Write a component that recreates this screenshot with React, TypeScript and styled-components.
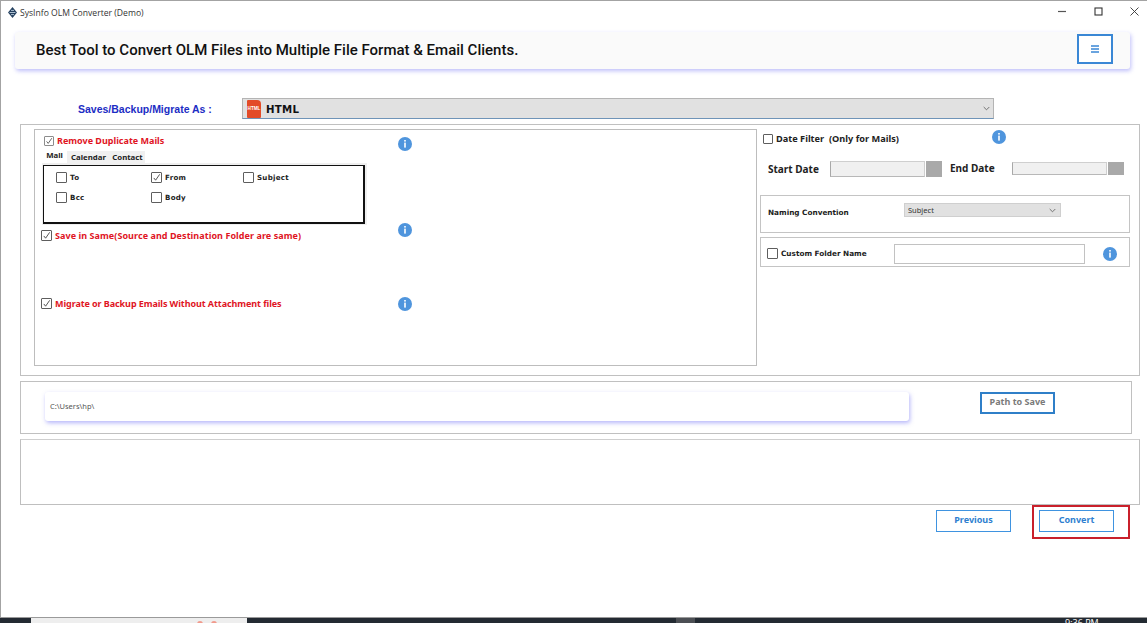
import React from "react";
import styled, { createGlobalStyle } from "styled-components";

const Global = createGlobalStyle`
  * { box-sizing: border-box; }
  html, body { margin: 0; padding: 0; background: #fff; }
  body { font-family: "Liberation Sans", Arial, sans-serif; overflow: hidden; }
`;

const Page = styled.div`
  width: 1147px; height: 623px; display: flex; flex-direction: column; overflow: hidden;
`;
const Win = styled.div`
  flex: 1; min-height: 0; border-top: 1px solid #a3a3a3; border-left: 1px solid #a3a3a3; background: #fff;
`;
const TitleBar = styled.div`
  height: 23px; display: flex; align-items: center; padding-left: 7px;
`;
const TitleText = styled.span`
  margin-left: 3px; font: 400 8.6px "Open Sans", sans-serif; color: #333; white-space: nowrap; flex: 1;
`;
const WinControls = styled.div`
  display: flex; align-items: center; gap: 27px; padding: 0 8px 2px 0; color: #333;
`;
const Banner = styled.div`
  margin: 8px 17px 0 14px; height: 37px; display: flex; justify-content: space-between;
  padding: 2px 17px 0 21px; background: #fafafa; border-radius: 3px;
  box-shadow: 1px 2px 4px rgba(110, 110, 245, 0.45);
`;
const BannerText = styled.h1`
  margin: 0; padding-top: 7px; font: 500 15px Roboto, sans-serif; color: #111; white-space: nowrap;
`;
const MenuButton = styled.div`
  width: 36px; height: 30px; border: 2px solid #3a87d5; background: #fff;
  display: flex; align-items: center; justify-content: center;
`;
const SaveRow = styled.div`
  margin-top: 29px; height: 21px; display: flex; align-items: center; padding-left: 77px;
`;
const SaveLabel = styled.label`
  width: 164px; font: 700 10.5px "Liberation Sans", sans-serif; color: #1c2dc4;
`;
const FormatSelect = styled.div`
  width: 752px; height: 21px; display: flex; align-items: center; padding: 0 3px 0 4px; background: #e1e1e1;
  border: 1px solid #b4b4b4; border-bottom: 1px solid #6f94b8;
`;
const FileIcon = styled.span`
  width: 14px; height: 18px; background: #e34b28; color: #fff; border-radius: 1px 4px 1px 1px;
  font: 700 4.6px "Liberation Sans", sans-serif; display: flex; align-items: center; justify-content: center; margin-right: 5px;
`;
const FormatName = styled.span`
  flex: 1; font: 700 10.2px "DejaVu Sans", sans-serif; color: #111; letter-spacing: 0.3px; padding-top: 1px;
`;
const MainPanel = styled.div`
  margin: 5px 7px 0 19px; height: 252px; border: 1px solid #c0c0c0; padding: 4px 0 0 13px; display: flex;
`;
const LeftPanel = styled.div`
  width: 723px; height: 237px; border: 1px solid #bdbdbd;
`;
const RightColumn = styled.div`
  margin-left: 3px; width: 370px;
`;
const OptionRow = styled.div<{ $top: number; $left: number; $height: number }>`
  display: flex; align-items: flex-start;
  margin-top: ${(p) => p.$top}px; padding-left: ${(p) => p.$left}px; height: ${(p) => p.$height}px;
`;
const OptionLabel = styled.div<{ $width: number; $height: number }>`
  width: ${(p) => p.$width}px; display: flex; align-items: center; gap: 3px; height: ${(p) => p.$height}px;
`;
const RedText = styled.span<{ $spread?: number; $lift?: number }>`
  font: 700 9px/12px "Noto Sans", sans-serif; color: #e0151f; white-space: nowrap;
  letter-spacing: ${(p) => p.$spread ?? 0}px; padding-bottom: ${(p) => p.$lift ?? 0}px;
`;
const InfoSlot = styled.span<{ $shift: number }>`
  display: block; margin-top: ${(p) => p.$shift}px; line-height: 0;
`;
const Box = styled.span<{ $size: number; $muted?: boolean }>`
  flex: none; width: ${(p) => p.$size}px; height: ${(p) => p.$size}px; background: #fff;
  border: 1px solid ${(p) => (p.$muted ? "#8c8c8c" : "#5e5e5e")};
  display: inline-flex; align-items: center; justify-content: center; border-radius: 1px;
`;
const TabStrip = styled.div`
  margin-left: 7px; height: 13px; display: flex; align-items: flex-end; font: 700 7.8px "Noto Sans", sans-serif; color: #222;
`;
const Tab = styled.div<{ $width: number; $active?: boolean }>`
  width: ${(p) => p.$width}px; height: ${(p) => (p.$active ? 13 : 12)}px; text-align: center;
  line-height: ${(p) => (p.$active ? 10 : 12)}px; background: ${(p) => (p.$active ? "#fff" : "#f0f0f0")};
`;
const TabBody = styled.div`
  margin-left: 7px; width: 325px; height: 62px; background: #efefef; padding: 2px 2px 1px 1px;
`;
const TabInner = styled.div`
  height: 59px; border: 1px solid #111; border-bottom-width: 2px; border-right-width: 2px; background: #fff; padding: 6px 0 0 12px;
  display: grid; grid-template-columns: 95px 92px 1fr; grid-auto-rows: 20px;
`;
const FieldCheck = styled.div`
  display: flex; align-items: flex-start; gap: 3px; font: 700 7.1px "DejaVu Sans", sans-serif; color: #222; letter-spacing: 0.25px; line-height: 11px;
`;
const DateBlock = styled.div`
  height: 66px;
`;
const DateHead = styled.div`
  display: flex; align-items: flex-start; padding: 5px 0 0 3px; height: 32px;
`;
const DateTitle = styled.div`
  width: 229px; height: 10px; display: flex; align-items: center; gap: 3px; font: 700 9.2px/10px "Noto Sans", sans-serif; color: #222; white-space: nowrap;
`;
const DateRow = styled.div`
  display: flex; align-items: flex-start; padding-left: 8px;
`;
const DateLabel = styled.span<{ $top: number }>`
  width: 62px; font: 700 10px/15px "Noto Sans", sans-serif; color: #222; margin-top: ${(p) => p.$top}px;
`;
const DateInput = styled.div<{ $height: number; $top: number }>`
  width: 95px; height: ${(p) => p.$height}px; margin-top: ${(p) => p.$top}px; background: #f0f0f0;
  border: 1px solid #cfcfcf; border-left-color: #a8a8a8; border-bottom-color: #b8b8b8;
`;
const CalButton = styled.div<{ $height: number; $top: number; $gap: number }>`
  width: 16px; height: ${(p) => p.$height}px; margin: ${(p) => p.$top}px ${(p) => p.$gap}px 0 1px; background: #a9a9a9;
`;
const SideBox = styled.div<{ $height: number; $top: number; $pad: number }>`
  height: ${(p) => p.$height}px; margin-top: ${(p) => p.$top}px; border: 1px solid #c4c4c4; padding-left: ${(p) => p.$pad}px;
  display: flex;
`;
const NamingLabel = styled.span`
  width: 136px; padding-top: 12px; font: 700 7.3px "DejaVu Sans", sans-serif; color: #222; white-space: nowrap;
`;
const FolderLabel = styled.span`
  width: 116px; padding-left: 3px; font: 700 7.3px "DejaVu Sans", sans-serif; color: #222; white-space: nowrap;
`;
const NamingSelect = styled.div`
  width: 157px; height: 14px; margin-top: 7px; background: #e1e1e1; border: 1px solid #cfcfcf; padding: 0 4px 0 3px;
  display: flex; align-items: center; justify-content: space-between; font: 400 7.5px "Noto Sans", sans-serif; color: #333;
`;
const FolderRow = styled.div`
  display: flex; align-items: center; width: 100%; padding-top: 3px;
`;
const FolderInput = styled.div`
  width: 191px; height: 20px; border: 1px solid #c2c2c2; margin: 0 18px 0 0; background: #fff;
`;
const PathPanel = styled.div`
  margin: 5px 15px 0 19px; height: 53px; border: 1px solid #c0c0c0; padding: 10px 0 0 24px; display: flex; align-items: flex-start;
`;
const PathInput = styled.div`
  width: 864px; height: 29px; background: #fff; border-radius: 3px; padding-left: 5px;
  font: 400 7.5px/29px "Noto Sans", sans-serif; color: #555;
  box-shadow: 1px 2px 4px rgba(110, 110, 245, 0.5);
`;
const ActionButton = styled.button<{ $color: string; $text: string; $strong?: boolean }>`
  width: 75px; height: 22px; padding: 0 0 2px; background: #fff; border: ${(p) => (p.$strong ? 2 : 1.5)}px solid ${(p) => p.$color};
  color: ${(p) => p.$text}; font: 700 9px "Noto Sans", sans-serif; cursor: pointer;
`;
const PathButtonSlot = styled.div`
  margin: -1px 0 0 71px;
`;
const LogBox = styled.div`
  margin: 5px 7px 0 19px; height: 66px; border: 1px solid #bfbfbf; border-top-color: #cfcfcf;
`;
const Footer = styled.div`
  padding-right: 17px; display: flex; justify-content: flex-end; align-items: flex-start;
`;
const PrevSlot = styled.div`
  margin: 4px 21px 0 0;
`;
const Highlight = styled.div`
  width: 98px; height: 34px; border: 2px solid #c9202b; padding: 2px 0 0 5px;
`;
const Taskbar = styled.div`
  height: 6px; flex: none; background: #232a32; border-top: 1px solid #9a9a9a; display: flex; overflow: hidden;
`;
const TaskWhite = styled.div`
  width: 216px; margin-left: 31px; background: #eeeeee; position: relative;
`;
const TaskDot = styled.span<{ $at: number }>`
  position: absolute; top: 3px; left: ${(p) => p.$at}px; width: 6px; height: 6px; border-radius: 50%; background: #f19a8c;
`;
const TaskActive = styled.div`
  width: 19px; margin-left: 429px; background: #4c4f54;
`;
const TaskClock = styled.span`
  margin-left: 370px; font: 400 9px/9px "Open Sans", sans-serif; color: #fff; white-space: nowrap;
`;

const Info = () => (
  <svg width="14" height="14" viewBox="0 0 14 14">
    <circle cx="7" cy="7" r="7" fill="#4f95dd" />
    <rect x="6.2" y="3" width="1.6" height="1.6" fill="#fff" />
    <rect x="6.2" y="5.6" width="1.6" height="5" fill="#fff" />
  </svg>
);

const Check: React.FC<{ size: number; on?: boolean; muted?: boolean }> = ({ size, on, muted }) => (
  <Box $size={size} $muted={muted}>
    {on && (
      <svg width={size - 2} height={size - 2} viewBox="0 0 10 10" fill="none" stroke="#444" strokeWidth="1">
        <path d="M2 5.5 L4 8 L8.5 1.5" />
      </svg>
    )}
  </Box>
);

const Chevron = () => (
  <svg width="7" height="5" viewBox="0 0 7 5" fill="none" stroke="#666" strokeWidth="0.9">
    <path d="M0.7 1 L3.5 3.8 L6.3 1" />
  </svg>
);

const Logo = () => (
  <svg width="9" height="11" viewBox="0 0 9 11">
    <path d="M4.5 0 L9 5.5 L4.5 11 L0 5.5 Z" fill="#24405f" />
    <path d="M1.6 5.5 H7.4 M3 3.4 H6 M3 7.6 H6" stroke="#cfe0ee" strokeWidth="0.8" />
  </svg>
);

export default function App() {
  return (
    <Page>
      <Global />
      <Win>
        <TitleBar>
          <Logo />
          <TitleText>SysInfo OLM Converter (Demo)</TitleText>
          <WinControls>
            <svg width="9" height="9" viewBox="0 0 9 9"><path d="M0 4.5 H8" stroke="#555" strokeWidth="1.2" /></svg>
            <svg width="9" height="9" viewBox="0 0 9 9" fill="none"><rect x="1" y="1" width="7" height="7" stroke="#333" strokeWidth="1.1" /></svg>
            <svg width="9" height="9" viewBox="0 0 9 9" fill="none"><path d="M0.5 0.5 L8.5 8.5 M8.5 0.5 L0.5 8.5" stroke="#333" strokeWidth="0.9" /></svg>
          </WinControls>
        </TitleBar>
        <Banner>
          <BannerText>Best Tool to Convert OLM Files into Multiple File Format &amp; Email Clients.</BannerText>
          <MenuButton>
            <svg width="8" height="8" viewBox="0 0 8 8"><path d="M0 1 H8 M0 4 H8 M0 7 H8" stroke="#3a87d5" strokeWidth="1.3" /></svg>
          </MenuButton>
        </Banner>
        <SaveRow>
          <SaveLabel>Saves/Backup/Migrate As :</SaveLabel>
          <FormatSelect>
            <FileIcon>HTML</FileIcon>
            <FormatName>HTML</FormatName>
            <Chevron />
          </FormatSelect>
        </SaveRow>
        <MainPanel>
          <LeftPanel>
            <OptionRow $top={6} $left={9} $height={14}>
              <OptionLabel $width={354} $height={10}>
                <Check size={10} on muted />
                <RedText $lift={1}>Remove Duplicate Mails</RedText>
              </OptionLabel>
              <InfoSlot $shift={1}><Info /></InfoSlot>
            </OptionRow>
            <TabStrip>
              <Tab $width={25} $active>Mail</Tab>
              <Tab $width={43}>Calendar</Tab>
              <Tab $width={35}>Contact</Tab>
            </TabStrip>
            <TabBody>
              <TabInner>
                <FieldCheck><Check size={11} />To</FieldCheck>
                <FieldCheck><Check size={11} on />From</FieldCheck>
                <FieldCheck><Check size={11} />Subject</FieldCheck>
                <FieldCheck><Check size={11} />Bcc</FieldCheck>
                <FieldCheck><Check size={11} />Body</FieldCheck>
              </TabInner>
            </TabBody>
            <OptionRow $top={5} $left={6} $height={12}>
              <OptionLabel $width={357} $height={11}>
                <Check size={11} on />
                <RedText $spread={0.06}>Save in Same(Source and Destination Folder are same)</RedText>
              </OptionLabel>
              <InfoSlot $shift={-7}><Info /></InfoSlot>
            </OptionRow>
            <OptionRow $top={56} $left={6} $height={12}>
              <OptionLabel $width={357} $height={11}>
                <Check size={11} on />
                <RedText $spread={-0.08}>Migrate or Backup Emails Without Attachment files</RedText>
              </OptionLabel>
              <InfoSlot $shift={-1}><Info /></InfoSlot>
            </OptionRow>
          </LeftPanel>
          <RightColumn>
            <DateBlock>
              <DateHead>
                <DateTitle>
                  <Check size={10} />
                  <span>Date Filter&nbsp; (Only for Mails)</span>
                </DateTitle>
                <InfoSlot $shift={-4}><Info /></InfoSlot>
              </DateHead>
              <DateRow>
                <DateLabel $top={1}>Start Date</DateLabel>
                <DateInput $height={16} $top={0} />
                <CalButton $height={16} $top={0} $gap={8} />
                <DateLabel $top={0}>End Date</DateLabel>
                <DateInput $height={13} $top={1} />
                <CalButton $height={13} $top={1} $gap={0} />
              </DateRow>
            </DateBlock>
            <SideBox $height={38} $top={0} $pad={7}>
              <NamingLabel>Naming Convention</NamingLabel>
              <NamingSelect>Subject<Chevron /></NamingSelect>
            </SideBox>
            <SideBox $height={30} $top={4} $pad={6}>
              <FolderRow>
                <Check size={11} />
                <FolderLabel>Custom Folder Name</FolderLabel>
                <FolderInput />
                <Info />
              </FolderRow>
            </SideBox>
          </RightColumn>
        </MainPanel>
        <PathPanel>
          <PathInput>C:\Users\hp\</PathInput>
          <PathButtonSlot>
            <ActionButton $color="#2f7fc8" $text="#7a7a7a" $strong>Path to Save</ActionButton>
          </PathButtonSlot>
        </PathPanel>
        <LogBox />
        <Footer>
          <PrevSlot>
            <ActionButton $color="#3f93e0" $text="#2f7fd0">Previous</ActionButton>
          </PrevSlot>
          <Highlight>
            <ActionButton $color="#3f93e0" $text="#2f7fd0">Convert</ActionButton>
          </Highlight>
        </Footer>
      </Win>
      <Taskbar>
        <TaskWhite>
          <TaskDot $at={166} />
          <TaskDot $at={180} />
        </TaskWhite>
        <TaskActive />
        <TaskClock>9:36 PM</TaskClock>
      </Taskbar>
    </Page>
  );
}
